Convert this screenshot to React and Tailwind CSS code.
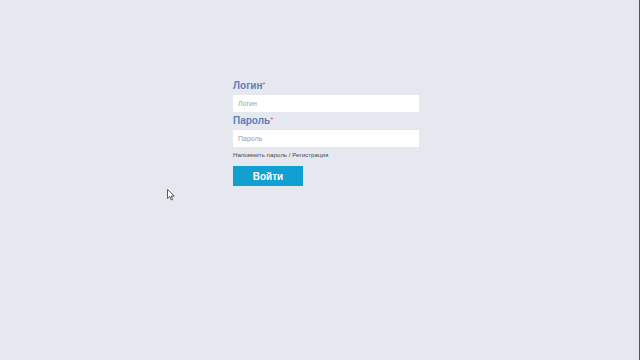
import React from 'react';

const Field = ({ label, placeholder, type = 'text' }) => (
  <div className="flex flex-col">
    <label className="h-[15px] text-[10px] font-bold leading-[12px] text-[#5b80b8]">
      {label}
      <span className="align-top text-[8px] font-normal leading-[10px] text-[#e2574c]">*</span>
    </label>
    <input
      type={type}
      placeholder={placeholder}
      className="h-[17px] w-[186px] bg-white px-[5px] text-[7px] text-[#555] placeholder:text-[#a0a0a0] outline-none"
    />
  </div>
);

const App = () => {
  return (
    <div
      className="relative h-[360px] w-full overflow-hidden bg-[#e5e8ef]"
      style={{ fontFamily: '"Liberation Sans", Arial, sans-serif' }}
    >
      <div className="flex flex-col pl-[233px] pt-[80px]">
        <Field label="Логин" placeholder="Логин" />
        <div className="h-[3px]" />
        <Field label="Пароль" placeholder="Пароль" type="password" />
        <div className="mt-[3px] text-[6.2px] leading-[9px] text-[#4a4a4a]">
          Напомнить пароль / Регистрация
        </div>
        <button className="mt-[7px] h-[20px] w-[70px] bg-[#12a0d2] text-[10px] font-bold text-white">
          Войти
        </button>
      </div>

      {/* mouse pointer */}
      <svg
        className="absolute left-[167px] top-[189px]"
        width="8"
        height="12"
        viewBox="0 0 8 12"
      >
        <path d="M0.5 0.5 L0.5 9.5 L2.8 7.5 L4.3 11 L5.6 10.4 L4.2 7 L7.3 7 Z" fill="#fff" stroke="#333" strokeWidth="0.8" />
      </svg>
      <div className="absolute right-0 top-0 h-full w-[1px] bg-[#555]" />
    </div>
  );
};

export default App;
